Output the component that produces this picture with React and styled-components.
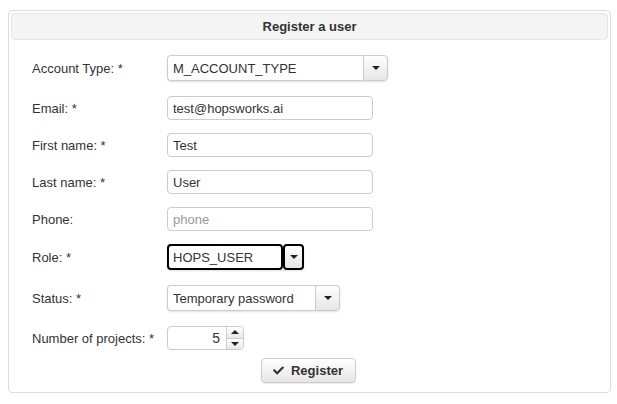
import React from "react";
import styled, { createGlobalStyle } from "styled-components";
import { FaCheck } from "react-icons/fa";

const GlobalStyle = createGlobalStyle`
  body {
    margin: 0;
    background: #ffffff;
    font-family: "Liberation Sans", Arial, sans-serif;
    font-size: 13px;
    color: #333;
  }
`;

const Page = styled.div`
  padding: 10px 10px 12px 8px;
`;

const Panel = styled.div`
  width: 597px;
  border: 1px solid #dcdcdc;
  border-radius: 4px;
  padding: 2px 2px 9px 2px;
`;

const Header = styled.div`
  height: 25px;
  border: 1px solid #e6e6e6;
  border-radius: 4px;
  background: #f4f4f4;
  display: flex;
  align-items: center;
  justify-content: center;
  font-weight: bold;
  font-size: 13px;
  color: #333;
`;

const Form = styled.div`
  padding: 15px 0 0 21px;
  display: flex;
  flex-direction: column;
`;

const Row = styled.div`
  display: flex;
  align-items: center;
  height: ${(p) => (p.$select ? 26 : 24)}px;
  margin-bottom: ${(p) => (p.$select ? 15 : 13)}px;
`;

const Label = styled.label`
  width: 135px;
  font-size: 13px;
  color: #333;
`;

const Input = styled.input`
  box-sizing: border-box;
  width: ${(p) => p.$w || 206}px;
  height: 24px;
  border: 1px solid #ccc;
  border-radius: 4px;
  padding: 0 5px;
  font-family: "Liberation Sans", Arial, sans-serif;
  font-size: 13px;
  color: #333;
  outline: none;
  &::placeholder {
    color: #999;
  }
`;

const SelectGroup = styled.div`
  display: flex;
  height: 26px;
  width: ${(p) => p.$w}px;
  border-radius: 4px;
  box-shadow: 0 1px 2px rgba(0, 0, 0, 0.12);
`;

const SelectText = styled.div`
  flex: 1;
  box-sizing: border-box;
  display: flex;
  align-items: center;
  padding-left: ${(p) => (p.$focus ? 4 : 5)}px;
  border: ${(p) => (p.$focus ? "2px solid #000" : "1px solid #ccc")};
  border-right: ${(p) => (p.$focus ? "2px solid #000" : "none")};
  border-radius: ${(p) => (p.$focus ? "4px" : "4px 0 0 4px")};
  background: #fff;
  font-size: 13px;
  color: #333;
  white-space: nowrap;
  overflow: hidden;
`;

const CaretButton = styled.div`
  box-sizing: border-box;
  width: ${(p) => p.$w || 25}px;
  display: flex;
  align-items: center;
  justify-content: center;
  border: ${(p) => (p.$focus ? "2px solid #000" : "1px solid #ccc")};
  border-radius: ${(p) => (p.$focus ? "4px" : "0 4px 4px 0")};
  background: linear-gradient(#ffffff, #e6e6e6);
`;

const Caret = styled.span`
  width: 0;
  height: 0;
  border-left: 4px solid transparent;
  border-right: 4px solid transparent;
  ${(p) => (p.$up ? "border-bottom" : "border-top")}: 4px solid #222;
`;

const NumberBox = styled.div`
  display: flex;
  height: 24px;
  width: 77px;
  border: 1px solid #ccc;
  border-radius: 4px;
  box-sizing: border-box;
  overflow: hidden;
`;

const NumberValue = styled.div`
  flex: 1;
  display: flex;
  align-items: center;
  justify-content: flex-end;
  padding-right: 6px;
  font-size: 14px;
  color: #333;
`;

const Spinner = styled.div`
  width: 16px;
  display: flex;
  flex-direction: column;
  border-left: 1px solid #ccc;
`;

const SpinHalf = styled.div`
  flex: 1;
  display: flex;
  align-items: center;
  justify-content: center;
  background: linear-gradient(#ffffff, #e8e8e8);
  & + & {
    border-top: 1px solid #ccc;
  }
`;

const ButtonRow = styled.div`
  display: flex;
  justify-content: center;
  margin-top: -5px;
  padding-right: 23px;
`;

const Button = styled.button`
  display: flex;
  align-items: center;
  gap: 7px;
  height: 25px;
  padding: 0 12px 0 11px;
  border: 1px solid #ccc;
  border-radius: 4px;
  background: linear-gradient(#ffffff, #e6e6e6);
  font-family: "Liberation Sans", Arial, sans-serif;
  font-weight: bold;
  font-size: 13px;
  color: #333;
  box-shadow: 0 1px 1px rgba(0, 0, 0, 0.08);
`;

function Select({ value, width, btnWidth, focus }) {
  return (
    <SelectGroup $w={width}>
      <SelectText $focus={focus}>{value}</SelectText>
      <CaretButton $w={btnWidth} $focus={focus}>
        <Caret />
      </CaretButton>
    </SelectGroup>
  );
}

export default function App() {
  return (
    <>
      <GlobalStyle />
      <Page>
        <Panel>
          <Header>Register a user</Header>
          <Form>
            <Row $select>
              <Label>Account Type: *</Label>
              <Select value="M_ACCOUNT_TYPE" width={221} btnWidth={25} />
            </Row>
            <Row>
              <Label>Email: *</Label>
              <Input defaultValue="test@hopsworks.ai" />
            </Row>
            <Row>
              <Label>First name: *</Label>
              <Input defaultValue="Test" />
            </Row>
            <Row>
              <Label>Last name: *</Label>
              <Input defaultValue="User" />
            </Row>
            <Row>
              <Label>Phone:</Label>
              <Input placeholder="phone" />
            </Row>
            <Row $select>
              <Label>Role: *</Label>
              <Select value="HOPS_USER" width={137} btnWidth={21} focus />
            </Row>
            <Row $select>
              <Label>Status: *</Label>
              <Select value="Temporary password" width={173} btnWidth={25} />
            </Row>
            <Row>
              <Label>Number of projects: *</Label>
              <NumberBox>
                <NumberValue>5</NumberValue>
                <Spinner>
                  <SpinHalf>
                    <Caret $up />
                  </SpinHalf>
                  <SpinHalf>
                    <Caret />
                  </SpinHalf>
                </Spinner>
              </NumberBox>
            </Row>
            <ButtonRow>
              <Button>
                <FaCheck size={11} />
                Register
              </Button>
            </ButtonRow>
          </Form>
        </Panel>
      </Page>
    </>
  );
}
